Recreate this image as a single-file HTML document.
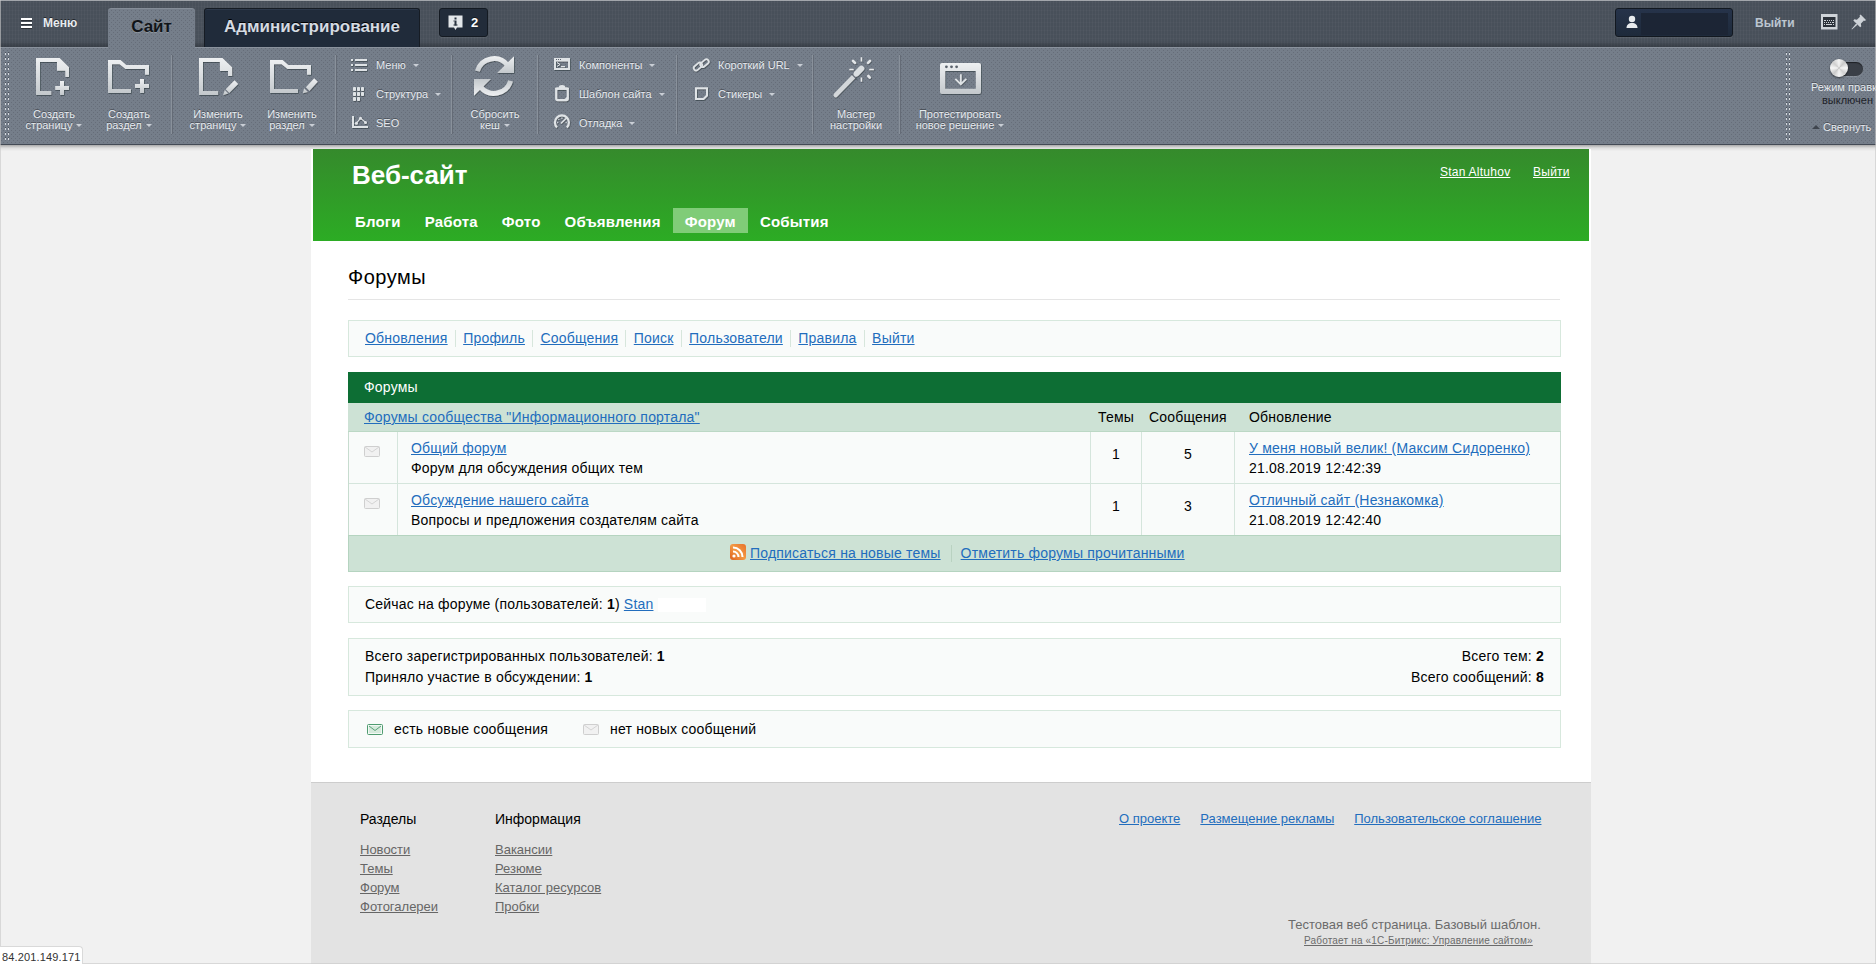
<!DOCTYPE html>
<html><head><meta charset="utf-8">
<style>
*{margin:0;padding:0;box-sizing:border-box}
html,body{width:1876px;height:964px;overflow:hidden}
body{background:#f1f1f1;font-family:"Liberation Sans",sans-serif;position:relative;color:#000}
.abs{position:absolute}
/* window borders */
#wb-top{left:0;top:0;width:1876px;height:1px;background:#a2a6ab;z-index:50}
#wb-left{left:0;top:0;width:1px;height:964px;background:rgba(200,200,200,.6);z-index:50}
#wb-right{left:1875px;top:0;width:1px;height:964px;background:rgba(200,200,200,.6);z-index:50}
/* top bar */
#topbar{left:0;top:1px;width:1876px;height:46px;background-color:#48505a;
 background-image:linear-gradient(transparent 40px,rgba(20,24,30,.35) 46px),repeating-linear-gradient(90deg,rgba(255,255,255,.03) 0 1px,transparent 1px 3px),repeating-linear-gradient(0deg,rgba(255,255,255,.02) 0 1px,transparent 1px 4px)}
#panel{left:0;top:47px;width:1876px;height:98px;background-color:#757e8a;
 background-image:conic-gradient(from 270deg at 1px 1px,#666d79 90deg,transparent 0),conic-gradient(from 270deg at 1px 1px,#666d79 90deg,transparent 0);
 background-size:4px 4px;background-position:1px 0,3px 2px;border-top:1px solid #8a929d;border-bottom:1px solid #434a55}
#shadow{left:0;top:145px;width:1876px;height:6px;background:linear-gradient(#a9a9a9,#dedede 50%,#f0f0f0)}
.tb-txt{color:#e8ecf0;font-weight:bold;text-shadow:0 -1px 0 rgba(0,0,0,.5)}
#menu-ic{left:21px;top:18px;width:11px;height:11px}
#menu-ic i{display:block;height:2px;background:#fff;margin-bottom:2px;box-shadow:0 1px 0 rgba(0,0,0,.4)}
#menu-t{left:43px;top:16px;font-size:12px}
#tab-site{left:108px;top:8px;width:87px;height:40px;background-color:#757e8a;border-radius:3px 3px 0 0;
 background-image:conic-gradient(from 270deg at 1px 1px,#666d79 90deg,transparent 0),conic-gradient(from 270deg at 1px 1px,#666d79 90deg,transparent 0);
 background-size:4px 4px;background-position:1px 0,3px 2px;box-shadow:inset 0 1px 0 #858d98;
 font-size:17px;font-weight:bold;color:#111418;text-align:center;line-height:38px;text-shadow:0 1px 0 rgba(255,255,255,.2);z-index:2}
#tab-adm{left:204px;top:8px;width:216px;height:39px;background:#202b3a;border:1px solid #161c24;border-bottom:none;border-radius:3px 3px 0 0;
 font-size:17px;font-weight:bold;color:#d5dbe2;text-align:center;line-height:36px;text-shadow:0 -1px 0 #000;box-shadow:inset 0 1px 0 #2c384a}
#notif{left:439px;top:8px;width:49px;height:29px;background:#222c3a;border:1px solid #141a22;border-radius:3px;box-shadow:0 1px 0 rgba(255,255,255,.08)}
#user{left:1615px;top:8px;width:118px;height:29px;background:linear-gradient(#26334a,#1e2a3b);border:1px solid #121820;border-radius:3px;box-shadow:0 1px 0 rgba(255,255,255,.08)}
#logout{left:1755px;top:16px;font-size:12px;color:#bcc6d1;font-weight:bold}
.lbl{font-size:11px;color:#e6eaef;text-align:center;line-height:11px;text-shadow:0 -1px 0 rgba(0,0,0,.35)}
.sm .arr{margin-left:7px}
.sm{font-size:11px;color:#e6eaef;text-shadow:0 -1px 0 rgba(0,0,0,.35)}
.arr{display:inline-block;width:0;height:0;border-left:3px solid transparent;border-right:3px solid transparent;border-top:3px solid #c9ced5;vertical-align:middle;margin-left:4px;position:relative;top:-1px}
.sep{width:1px;background:#89919b;box-shadow:1px 0 0 #646b76}
svg.ic{position:absolute;overflow:visible}
/* site */
#site{left:311px;top:149px;width:1280px;height:633px;background:#fff}
#green{left:313px;top:149px;width:1276px;height:92px;background:linear-gradient(#358a2c,#2cac24)}
#logo{left:352px;top:160px;font-size:26px;font-weight:bold;color:#fff}
#hlinks{top:165px;font-size:12px;color:#fff;text-decoration:underline}
#nav{left:343px;top:208px;height:25px;display:flex}
#nav a{display:block;padding:1px 12px 0;letter-spacing:.2px;font-size:15px;font-weight:bold;color:#fff;line-height:26px;height:25px;text-decoration:none}
#nav a.act{background:#80cc78}
#h1{left:348px;top:266px;font-size:20px;letter-spacing:.5px;color:#000}
#hr{left:348px;top:299px;width:1212px;height:1px;background:#e5e5e5}
.box{position:absolute;left:348px;width:1213px;background:#f9fbfa;border:1px solid #d7e8dd;font-size:14px;letter-spacing:.2px}
a.l{color:#226dbd;text-decoration:underline}
#fnav{top:320px;height:37px;padding:8px 0 0 16px;line-height:18px}
#fnav .s{display:inline-block;width:1px;height:17px;background:#d7e6dc;vertical-align:middle;margin:0 7.5px 0 7px;position:relative;top:-1px}
#tbl{left:348px;top:372px;width:1213px;font-size:14px}
#th{left:348px;top:372px;width:1213px;height:31px;background:#0d6e34;color:#fff;font-size:14px;letter-spacing:.2px;padding:7px 0 0 16px}
.cell{position:absolute}

.t14{font-size:14px;color:#000;letter-spacing:.2px}
.vs{display:inline-block;width:1px;height:17px;background:#b9d2c1;vertical-align:middle;margin:0 9px 0 10px;position:relative;top:-1px}
.flk{font-size:13px;line-height:19px;color:#666;text-decoration:underline}
</style></head><body>
<div id="wb-top" class="abs"></div><div id="wb-left" class="abs"></div><div id="wb-right" class="abs"></div><div class="abs" style="left:0;top:963px;width:1876px;height:1px;background:rgba(200,200,200,.6);z-index:50"></div>

<!-- TOP BAR -->
<div id="topbar" class="abs"></div>
<div id="menu-ic" class="abs"><i></i><i></i><i></i></div>
<div id="menu-t" class="abs tb-txt">Меню</div>
<div id="panel" class="abs"></div>
<div id="tab-site" class="abs">Сайт</div>
<div id="tab-adm" class="abs">Администрирование</div>
<div id="notif" class="abs">
 <svg class="ic" style="left:8px;top:6px" width="15" height="16" viewBox="0 0 15 16"><path d="M0.5 0.5h14v12H9L7.5 15 6 12.5H0.5z" fill="#e3e7ea"/><rect x="6.5" y="2.5" width="2" height="2" fill="#28323f"/><rect x="6.5" y="5.5" width="2" height="5" fill="#28323f"/><rect x="5.5" y="5.5" width="1" height="1" fill="#28323f"/><rect x="5.5" y="9.5" width="4" height="1" fill="#28323f"/></svg>
 <span class="abs tb-txt" style="left:31px;top:6px;font-size:13px;color:#fff">2</span>
</div>
<div id="user" class="abs"><div class="abs" style="left:25px;top:4px;width:87px;height:22px;background:#1c2535"></div>
 <svg class="ic" style="left:10px;top:6px" width="12" height="14" viewBox="0 0 12 14"><circle cx="6" cy="4" r="3.2" fill="#e8ebee"/><path d="M0.5 13c0-3 2-5 5.5-5s5.5 2 5.5 5z" fill="#e8ebee"/></svg>
</div>
<div id="logout" class="abs">Выйти</div>
<svg class="ic" style="left:1821px;top:14px" width="17" height="16" viewBox="0 0 17 16"><rect x="0" y="0" width="16.5" height="15.5" fill="#cfd4d9"/><rect x="2" y="3" width="12.5" height="10" fill="#2c323a"/><g fill="#cfd4d9"><rect x="3" y="6" width="2" height="1"/><rect x="6" y="6" width="1" height="1"/><rect x="8" y="6" width="1" height="1"/><rect x="10" y="6" width="1" height="1"/><rect x="12" y="6" width="1" height="1"/><rect x="3" y="8" width="1" height="1"/><rect x="5" y="8" width="1" height="1"/><rect x="7" y="8" width="1" height="1"/><rect x="9" y="8" width="1" height="1"/><rect x="11" y="8" width="2" height="1"/><rect x="3" y="10" width="1" height="1"/><rect x="5" y="10" width="6" height="1"/><rect x="12" y="10" width="1" height="1"/></g></svg>
<svg class="ic" style="left:1851px;top:14px" width="16" height="16" viewBox="0 0 16 16"><g fill="#cdd2d7"><path d="M9.6 0.6L15 6 13.9 7.1 12.9 6.6 9.8 9.7 10.3 12.2 9.2 13.3 2.3 6.4 3.4 5.3 5.9 5.8 9 2.7 8.5 1.7Z"/><path d="M5.2 9.6L6.4 10.8 1 15.5 0.6 15.1Z"/></g></svg>

<!-- panel grip -->
<svg class="abs" style="left:0;top:0;z-index:5" width="1876" height="150" viewBox="0 0 1876 150">
<defs>
 <linearGradient id="ig" x1="0" y1="0" x2="0" y2="1"><stop offset="0" stop-color="#eef0f2"/><stop offset="1" stop-color="#c3c8cc"/></linearGradient>
 <filter id="sh" x="-20%" y="-20%" width="140%" height="140%"><feDropShadow dx="0.6" dy="0.8" stdDeviation="0.5" flood-color="#2a3038" flood-opacity="0.7"/></filter>
</defs>
<g><rect x="5" y="52" width="1" height="1" fill="#4b525c"/><rect x="5" y="53" width="1" height="2" fill="#d5d9de"/><rect x="5" y="57" width="1" height="1" fill="#4b525c"/><rect x="5" y="58" width="1" height="2" fill="#d5d9de"/><rect x="5" y="62" width="1" height="1" fill="#4b525c"/><rect x="5" y="63" width="1" height="2" fill="#d5d9de"/><rect x="5" y="67" width="1" height="1" fill="#4b525c"/><rect x="5" y="68" width="1" height="2" fill="#d5d9de"/><rect x="5" y="72" width="1" height="1" fill="#4b525c"/><rect x="5" y="73" width="1" height="2" fill="#d5d9de"/><rect x="5" y="77" width="1" height="1" fill="#4b525c"/><rect x="5" y="78" width="1" height="2" fill="#d5d9de"/><rect x="5" y="82" width="1" height="1" fill="#4b525c"/><rect x="5" y="83" width="1" height="2" fill="#d5d9de"/><rect x="5" y="87" width="1" height="1" fill="#4b525c"/><rect x="5" y="88" width="1" height="2" fill="#d5d9de"/><rect x="5" y="92" width="1" height="1" fill="#4b525c"/><rect x="5" y="93" width="1" height="2" fill="#d5d9de"/><rect x="5" y="97" width="1" height="1" fill="#4b525c"/><rect x="5" y="98" width="1" height="2" fill="#d5d9de"/><rect x="5" y="102" width="1" height="1" fill="#4b525c"/><rect x="5" y="103" width="1" height="2" fill="#d5d9de"/><rect x="5" y="107" width="1" height="1" fill="#4b525c"/><rect x="5" y="108" width="1" height="2" fill="#d5d9de"/><rect x="5" y="112" width="1" height="1" fill="#4b525c"/><rect x="5" y="113" width="1" height="2" fill="#d5d9de"/><rect x="5" y="117" width="1" height="1" fill="#4b525c"/><rect x="5" y="118" width="1" height="2" fill="#d5d9de"/><rect x="5" y="122" width="1" height="1" fill="#4b525c"/><rect x="5" y="123" width="1" height="2" fill="#d5d9de"/><rect x="5" y="127" width="1" height="1" fill="#4b525c"/><rect x="5" y="128" width="1" height="2" fill="#d5d9de"/><rect x="5" y="132" width="1" height="1" fill="#4b525c"/><rect x="5" y="133" width="1" height="2" fill="#d5d9de"/><rect x="5" y="137" width="1" height="1" fill="#4b525c"/><rect x="5" y="138" width="1" height="2" fill="#d5d9de"/><rect x="8" y="52" width="1" height="1" fill="#4b525c"/><rect x="8" y="53" width="1" height="2" fill="#d5d9de"/><rect x="8" y="57" width="1" height="1" fill="#4b525c"/><rect x="8" y="58" width="1" height="2" fill="#d5d9de"/><rect x="8" y="62" width="1" height="1" fill="#4b525c"/><rect x="8" y="63" width="1" height="2" fill="#d5d9de"/><rect x="8" y="67" width="1" height="1" fill="#4b525c"/><rect x="8" y="68" width="1" height="2" fill="#d5d9de"/><rect x="8" y="72" width="1" height="1" fill="#4b525c"/><rect x="8" y="73" width="1" height="2" fill="#d5d9de"/><rect x="8" y="77" width="1" height="1" fill="#4b525c"/><rect x="8" y="78" width="1" height="2" fill="#d5d9de"/><rect x="8" y="82" width="1" height="1" fill="#4b525c"/><rect x="8" y="83" width="1" height="2" fill="#d5d9de"/><rect x="8" y="87" width="1" height="1" fill="#4b525c"/><rect x="8" y="88" width="1" height="2" fill="#d5d9de"/><rect x="8" y="92" width="1" height="1" fill="#4b525c"/><rect x="8" y="93" width="1" height="2" fill="#d5d9de"/><rect x="8" y="97" width="1" height="1" fill="#4b525c"/><rect x="8" y="98" width="1" height="2" fill="#d5d9de"/><rect x="8" y="102" width="1" height="1" fill="#4b525c"/><rect x="8" y="103" width="1" height="2" fill="#d5d9de"/><rect x="8" y="107" width="1" height="1" fill="#4b525c"/><rect x="8" y="108" width="1" height="2" fill="#d5d9de"/><rect x="8" y="112" width="1" height="1" fill="#4b525c"/><rect x="8" y="113" width="1" height="2" fill="#d5d9de"/><rect x="8" y="117" width="1" height="1" fill="#4b525c"/><rect x="8" y="118" width="1" height="2" fill="#d5d9de"/><rect x="8" y="122" width="1" height="1" fill="#4b525c"/><rect x="8" y="123" width="1" height="2" fill="#d5d9de"/><rect x="8" y="127" width="1" height="1" fill="#4b525c"/><rect x="8" y="128" width="1" height="2" fill="#d5d9de"/><rect x="8" y="132" width="1" height="1" fill="#4b525c"/><rect x="8" y="133" width="1" height="2" fill="#d5d9de"/><rect x="8" y="137" width="1" height="1" fill="#4b525c"/><rect x="8" y="138" width="1" height="2" fill="#d5d9de"/><rect x="1786" y="52" width="1" height="1" fill="#4b525c"/><rect x="1786" y="53" width="1" height="2" fill="#d5d9de"/><rect x="1786" y="57" width="1" height="1" fill="#4b525c"/><rect x="1786" y="58" width="1" height="2" fill="#d5d9de"/><rect x="1786" y="62" width="1" height="1" fill="#4b525c"/><rect x="1786" y="63" width="1" height="2" fill="#d5d9de"/><rect x="1786" y="67" width="1" height="1" fill="#4b525c"/><rect x="1786" y="68" width="1" height="2" fill="#d5d9de"/><rect x="1786" y="72" width="1" height="1" fill="#4b525c"/><rect x="1786" y="73" width="1" height="2" fill="#d5d9de"/><rect x="1786" y="77" width="1" height="1" fill="#4b525c"/><rect x="1786" y="78" width="1" height="2" fill="#d5d9de"/><rect x="1786" y="82" width="1" height="1" fill="#4b525c"/><rect x="1786" y="83" width="1" height="2" fill="#d5d9de"/><rect x="1786" y="87" width="1" height="1" fill="#4b525c"/><rect x="1786" y="88" width="1" height="2" fill="#d5d9de"/><rect x="1786" y="92" width="1" height="1" fill="#4b525c"/><rect x="1786" y="93" width="1" height="2" fill="#d5d9de"/><rect x="1786" y="97" width="1" height="1" fill="#4b525c"/><rect x="1786" y="98" width="1" height="2" fill="#d5d9de"/><rect x="1786" y="102" width="1" height="1" fill="#4b525c"/><rect x="1786" y="103" width="1" height="2" fill="#d5d9de"/><rect x="1786" y="107" width="1" height="1" fill="#4b525c"/><rect x="1786" y="108" width="1" height="2" fill="#d5d9de"/><rect x="1786" y="112" width="1" height="1" fill="#4b525c"/><rect x="1786" y="113" width="1" height="2" fill="#d5d9de"/><rect x="1786" y="117" width="1" height="1" fill="#4b525c"/><rect x="1786" y="118" width="1" height="2" fill="#d5d9de"/><rect x="1786" y="122" width="1" height="1" fill="#4b525c"/><rect x="1786" y="123" width="1" height="2" fill="#d5d9de"/><rect x="1786" y="127" width="1" height="1" fill="#4b525c"/><rect x="1786" y="128" width="1" height="2" fill="#d5d9de"/><rect x="1786" y="132" width="1" height="1" fill="#4b525c"/><rect x="1786" y="133" width="1" height="2" fill="#d5d9de"/><rect x="1786" y="137" width="1" height="1" fill="#4b525c"/><rect x="1786" y="138" width="1" height="2" fill="#d5d9de"/><rect x="1789" y="52" width="1" height="1" fill="#4b525c"/><rect x="1789" y="53" width="1" height="2" fill="#d5d9de"/><rect x="1789" y="57" width="1" height="1" fill="#4b525c"/><rect x="1789" y="58" width="1" height="2" fill="#d5d9de"/><rect x="1789" y="62" width="1" height="1" fill="#4b525c"/><rect x="1789" y="63" width="1" height="2" fill="#d5d9de"/><rect x="1789" y="67" width="1" height="1" fill="#4b525c"/><rect x="1789" y="68" width="1" height="2" fill="#d5d9de"/><rect x="1789" y="72" width="1" height="1" fill="#4b525c"/><rect x="1789" y="73" width="1" height="2" fill="#d5d9de"/><rect x="1789" y="77" width="1" height="1" fill="#4b525c"/><rect x="1789" y="78" width="1" height="2" fill="#d5d9de"/><rect x="1789" y="82" width="1" height="1" fill="#4b525c"/><rect x="1789" y="83" width="1" height="2" fill="#d5d9de"/><rect x="1789" y="87" width="1" height="1" fill="#4b525c"/><rect x="1789" y="88" width="1" height="2" fill="#d5d9de"/><rect x="1789" y="92" width="1" height="1" fill="#4b525c"/><rect x="1789" y="93" width="1" height="2" fill="#d5d9de"/><rect x="1789" y="97" width="1" height="1" fill="#4b525c"/><rect x="1789" y="98" width="1" height="2" fill="#d5d9de"/><rect x="1789" y="102" width="1" height="1" fill="#4b525c"/><rect x="1789" y="103" width="1" height="2" fill="#d5d9de"/><rect x="1789" y="107" width="1" height="1" fill="#4b525c"/><rect x="1789" y="108" width="1" height="2" fill="#d5d9de"/><rect x="1789" y="112" width="1" height="1" fill="#4b525c"/><rect x="1789" y="113" width="1" height="2" fill="#d5d9de"/><rect x="1789" y="117" width="1" height="1" fill="#4b525c"/><rect x="1789" y="118" width="1" height="2" fill="#d5d9de"/><rect x="1789" y="122" width="1" height="1" fill="#4b525c"/><rect x="1789" y="123" width="1" height="2" fill="#d5d9de"/><rect x="1789" y="127" width="1" height="1" fill="#4b525c"/><rect x="1789" y="128" width="1" height="2" fill="#d5d9de"/><rect x="1789" y="132" width="1" height="1" fill="#4b525c"/><rect x="1789" y="133" width="1" height="2" fill="#d5d9de"/><rect x="1789" y="137" width="1" height="1" fill="#4b525c"/><rect x="1789" y="138" width="1" height="2" fill="#d5d9de"/></g>
<g filter="url(#sh)">
 <g fill="url(#ig)">
  <path d="M36 58H59.6L69 67.3V77H65.3V70.7H57V62H40V91H51.3V95H36Z"/>
  <path d="M55.2 86H69V90H55.2Z M60 81H64V95H60Z"/>
 </g>
 <g fill="url(#ig)">
  <path d="M108 60H120.6L126.3 65H149V74.8H145V68.9H125.5L119.6 64.2H112V89H131V93H108Z"/>
  <path d="M135 84H149V88H135Z M140 79H144V93H140Z"/>
 </g>
 <g fill="url(#ig)">
  <path d="M199 58H222.5L232.1 67.3V76H228V70.9H219.9V62H203V91H218.1V95H199Z"/>
  <path d="M225.7 89.3L234.5 80.3L238.2 84L229.3 93Z M223 95.2L224.8 90L228.3 93.5Z"/>
 </g>
 <g fill="url(#ig)">
  <path d="M270 60H282.6L288.3 65H311V74.8H307V68.9H287.5L281.6 64.2H274V89H298V93H270Z"/>
  <path d="M305.9 87.3L314.2 78.2L317.8 81.8L309.5 90.9Z M302.8 93.2L304.1 88.3L308 91.9Z"/>
 </g>
 <g fill="url(#ig)"><path d="M475.0 70.4A19.8 19.8 0 0 1 509.6 63.8L505.7 66.9A14.8 14.8 0 0 0 479.8 71.8Z M514 56.2V73H497Z"/><path d="M475.0 70.4A19.8 19.8 0 0 1 509.6 63.8L505.7 66.9A14.8 14.8 0 0 0 479.8 71.8Z M514 56.2V73H497Z" transform="rotate(180 494 76)"/></g>
 <g fill="url(#ig)" stroke="none">
  <path d="M835.8 95L853.4 76.9" stroke="#d3d7da" stroke-width="4.6" stroke-linecap="round"/>
  <path d="M856.6 73.6L861.4 68.6" stroke="#dadee1" stroke-width="5.8" stroke-linecap="round"/><path d="M851.8 74.2L856.4 78.8" stroke="#5d6470" stroke-width="1.1"/>
  <g stroke="#e6e9eb" stroke-width="1.5"><path d="M861.4 57.2V61.6M861.4 77.4V81.8M849.3 69.5H853.7M869.2 69.5H873.9"/></g>
  <g stroke="#e3e6e9" stroke-width="2.6" stroke-linecap="round"><path d="M853 60.8L855 62.8M870 60.8L868 62.8M868.3 76L869.8 77.6"/></g>
 </g>
 <g>
  <path fill="url(#ig)" fill-rule="evenodd" d="M942 63H979Q981 63 981 65V92Q981 94 979 94H942Q940 94 940 92V65Q940 63 942 63Z M945.2 71.1V88.8H975.8V71.1Z"/>
  <g fill="#5a626d"><circle cx="946.4" cy="66.8" r="1.4"/><circle cx="951.5" cy="66.8" r="1.4"/><circle cx="956.6" cy="66.8" r="1.4"/></g>
  <path d="M960.8 74.3V84.5M955.3 78.8L960.8 84.3L966.3 78.8" fill="none" stroke="#dfe3e6" stroke-width="1.8"/>
 </g>
 <!-- small icons -->
 <g fill="#dfe3e6">
  <rect x="351" y="59" width="2" height="2"/><rect x="355" y="59" width="12" height="2"/>
  <rect x="351" y="64" width="2" height="2"/><rect x="355" y="64" width="12" height="2"/>
  <rect x="351" y="69" width="2" height="2"/><rect x="355" y="69" width="12" height="2"/>
  <rect x="353" y="87" width="3" height="4" rx=".7"/><rect x="357" y="87" width="3" height="4" rx=".7"/><rect x="361" y="87" width="3" height="4" rx=".7"/>
  <rect x="353" y="92" width="3" height="4" rx=".7"/><rect x="357" y="92" width="3" height="4" rx=".7"/><rect x="361" y="92" width="3" height="4" rx=".7"/>
  <rect x="353" y="97" width="3" height="4" rx=".7"/><rect x="357" y="97" width="3" height="4" rx=".7"/>
  <path d="M352 116H354V126H368V128H352Z"/>
  <path d="M356.4 123.2L360.5 118.2L365.5 122.4" fill="none" stroke="#dfe3e6" stroke-width="1.1"/>
  <circle cx="356.4" cy="123.2" r="1.5"/><circle cx="360.5" cy="118.2" r="1.5"/><circle cx="365.5" cy="122.4" r="1.5"/>
 </g>
 <g fill="#dfe3e6">
  <path fill-rule="evenodd" d="M554 58H570V70H554Z M556 61.5V68H568V61.5Z"/>
  <g fill="#5d6570"><rect x="556" y="59" width="1" height="1"/><rect x="558" y="59" width="1" height="1"/><rect x="560" y="59" width="1" height="1"/></g><path d="M557 62.5L560 64.5L557 66.5" fill="none" stroke="#dfe3e6" stroke-width="1"/><rect x="561" y="66" width="4" height="1.2"/>
  <rect x="556.2" y="88.6" width="11.6" height="11.6" rx="1.6" fill="none" stroke="#dfe3e6" stroke-width="2.2"/>
  <rect x="555" y="87.5" width="14" height="2.2" rx="1"/>
  <ellipse cx="562" cy="87" rx="3.2" ry="2"/>
  <path d="M564.5 99.2L567 96.7V99.2Z"/>
  <path d="M557 127.4A7 7 0 1 1 566.8 127.4" fill="none" stroke="#dfe3e6" stroke-width="2.2"/>
  <g fill="#c9ced3"><circle cx="557.6" cy="122.5" r=".7"/><circle cx="558.8" cy="119.4" r=".7"/><circle cx="561.9" cy="118.2" r=".7"/><circle cx="566.2" cy="122.5" r=".7"/></g>
  <path d="M561.4 123L566.3 118.3" stroke="#dfe3e6" stroke-width="1.5" stroke-linecap="round"/>
 </g>
 <g fill="none" stroke="#dfe3e6" stroke-width="1.7">
  <rect x="693.2" y="64.2" width="9.5" height="4.8" rx="2.4" transform="rotate(-40 697.9 66.6)"/>
  <rect x="699.8" y="60.8" width="9.5" height="4.8" rx="2.4" transform="rotate(-40 704.5 63.2)"/>
  <path d="M696 88.2H707V95.5L703.5 99H696Z" stroke-width="2"/>
 </g>
</g>
</svg>
<div class="abs sep" style="left:171px;top:55px;height:79px"></div>
<div class="abs sep" style="left:335px;top:55px;height:79px"></div>
<div class="abs sep" style="left:451px;top:55px;height:79px"></div>
<div class="abs sep" style="left:537px;top:55px;height:79px"></div>
<div class="abs sep" style="left:676px;top:55px;height:79px"></div>
<div class="abs sep" style="left:812px;top:55px;height:79px"></div>
<div class="abs sep" style="left:899px;top:55px;height:79px"></div>
<div class="abs lbl" style="left:20px;top:109px;width:68px">Создать<br>страницу<span class="arr"></span></div>
<div class="abs lbl" style="left:94px;top:109px;width:70px">Создать<br>раздел<span class="arr"></span></div>
<div class="abs lbl" style="left:182px;top:109px;width:72px">Изменить<br>страницу<span class="arr"></span></div>
<div class="abs lbl" style="left:256px;top:109px;width:72px">Изменить<br>раздел<span class="arr"></span></div>
<div class="abs sm" style="left:376px;top:59px">Меню<span class="arr"></span></div>
<div class="abs sm" style="left:376px;top:88px">Структура<span class="arr"></span></div>
<div class="abs sm" style="left:376px;top:117px">SEO</div>
<div class="abs lbl" style="left:460px;top:109px;width:70px">Сбросить<br>кеш<span class="arr"></span></div>
<div class="abs sm" style="left:579px;top:59px">Компоненты<span class="arr"></span></div>
<div class="abs sm" style="left:579px;top:88px">Шаблон сайта<span class="arr"></span></div>
<div class="abs sm" style="left:579px;top:117px">Отладка<span class="arr"></span></div>
<div class="abs sm" style="left:718px;top:59px">Короткий URL<span class="arr"></span></div>
<div class="abs sm" style="left:718px;top:88px">Стикеры<span class="arr"></span></div>
<div class="abs lbl" style="left:822px;top:109px;width:68px">Мастер<br>настройки</div>
<div class="abs lbl" style="left:905px;top:109px;width:110px">Протестировать<br>новое решение<span class="arr"></span></div>

<!-- edit mode toggle -->
<div class="abs" style="left:1836px;top:62px;width:27px;height:14px;border-radius:7px;background:#3a3f47;box-shadow:inset 0 1px 1px rgba(0,0,0,.5),0 1px 0 rgba(255,255,255,.15)"></div>
<div class="abs" style="left:1830px;top:59px;width:18px;height:18px;border-radius:50%;background:conic-gradient(#f4f4f4,#c9c9c9 12%,#f7f7f7 25%,#cfcfcf 37%,#f4f4f4 50%,#c9c9c9 62%,#f7f7f7 75%,#cfcfcf 87%,#f4f4f4);box-shadow:0 1px 2px rgba(0,0,0,.55)"></div>
<div class="abs sm" style="left:1811px;top:81px;white-space:nowrap">Режим правки</div>
<div class="abs" style="left:1822px;top:94px;font-size:11px;color:#1e2228">выключен</div>
<div class="abs sm" style="left:1812px;top:121px"><span style="display:inline-block;width:0;height:0;border-left:4px solid transparent;border-right:4px solid transparent;border-bottom:4px solid #3f454e;margin-right:3px;vertical-align:middle;position:relative;top:-1px"></span>Свернуть</div>
<div id="shadow" class="abs"></div>

<!-- SITE -->
<div id="site" class="abs"></div>
<div id="green" class="abs"></div>
<div id="logo" class="abs">Веб-сайт</div>
<a id="hl1" class="abs" style="left:1440px;top:165px;font-size:12px;letter-spacing:.25px;color:#fff;text-decoration:underline">Stan Altuhov</a>
<a id="hl2" class="abs" style="left:1533px;top:165px;font-size:12px;letter-spacing:.25px;color:#fff;text-decoration:underline">Выйти</a>
<div id="nav" class="abs"><a>Блоги</a><a>Работа</a><a>Фото</a><a>Объявления</a><a class="act">Форум</a><a>События</a></div>

<div id="h1" class="abs">Форумы</div>
<div id="hr" class="abs"></div>

<div id="fnav" class="box"><a class="l">Обновления</a><span class="s"></span><a class="l">Профиль</a><span class="s"></span><a class="l">Сообщения</a><span class="s"></span><a class="l">Поиск</a><span class="s"></span><a class="l">Пользователи</a><span class="s"></span><a class="l">Правила</a><span class="s"></span><a class="l">Выйти</a></div>


<!-- FORUM TABLE -->
<div id="th" class="abs">Форумы</div>
<div class="abs" style="left:348px;top:403px;width:1213px;height:169px;border:1px solid #c7dccf;border-top:none;background:#f9fbfa"></div>
<div class="abs" style="left:348px;top:403px;width:1213px;height:29px;background:#cde2d5"></div>
<div class="abs" style="left:348px;top:535px;width:1213px;height:37px;background:#cde2d5;border:1px solid #b5d4c0;"></div>
<!-- row separators -->
<div class="abs" style="left:348px;top:431px;width:1213px;height:1px;background:#bcd8c5"></div>
<div class="abs" style="left:349px;top:483px;width:1211px;height:1px;background:#d5e5dc"></div>
<div class="abs" style="left:397px;top:432px;width:1px;height:103px;background:#d5e5dc"></div>
<div class="abs" style="left:1090px;top:432px;width:1px;height:103px;background:#d5e5dc"></div>
<div class="abs" style="left:1141px;top:432px;width:1px;height:103px;background:#d5e5dc"></div>
<div class="abs" style="left:1234px;top:432px;width:1px;height:103px;background:#d5e5dc"></div>

<div class="abs t14" style="left:364px;top:409px"><a class="l">Форумы сообщества "Информационного портала"</a></div>
<div class="abs t14" style="left:1098px;top:409px">Темы</div>
<div class="abs t14" style="left:1149px;top:409px">Сообщения</div>
<div class="abs t14" style="left:1249px;top:409px">Обновление</div>

<svg class="ic" style="left:364px;top:446px" width="16" height="11" viewBox="0 0 16 11"><rect x=".5" y=".5" width="15" height="10" rx="1" fill="#f1f1f1" stroke="#cfcfcf"/><path d="M1 1l7 5 7-5" fill="none" stroke="#d4d4d4"/></svg>
<div class="abs t14" style="left:411px;top:438px;line-height:20px"><a class="l">Общий форум</a><br>Форум для обсуждения общих тем</div>
<div class="abs t14" style="left:1091px;top:446px;width:50px;text-align:center">1</div>
<div class="abs t14" style="left:1142px;top:446px;width:92px;text-align:center">5</div>
<div class="abs t14" style="left:1249px;top:438px;line-height:20px"><a class="l">У меня новый велик! (Максим Сидоренко)</a><br>21.08.2019 12:42:39</div>

<svg class="ic" style="left:364px;top:498px" width="16" height="11" viewBox="0 0 16 11"><rect x=".5" y=".5" width="15" height="10" rx="1" fill="#f1f1f1" stroke="#cfcfcf"/><path d="M1 1l7 5 7-5" fill="none" stroke="#d4d4d4"/></svg>
<div class="abs t14" style="left:411px;top:490px;line-height:20px"><a class="l">Обсуждение нашего сайта</a><br>Вопросы и предложения создателям сайта</div>
<div class="abs t14" style="left:1091px;top:498px;width:50px;text-align:center">1</div>
<div class="abs t14" style="left:1142px;top:498px;width:92px;text-align:center">3</div>
<div class="abs t14" style="left:1249px;top:490px;line-height:20px"><a class="l">Отличный сайт (Незнакомка)</a><br>21.08.2019 12:42:40</div>

<svg class="ic" style="left:730px;top:544px" width="16" height="16" viewBox="0 0 16 16"><defs><linearGradient id="rg" x1="1" y1="0" x2="0" y2="1"><stop offset="0" stop-color="#e7702a"/><stop offset=".5" stop-color="#f39a45"/><stop offset="1" stop-color="#dd5f1c"/></linearGradient></defs><rect x="0" y="0" width="16" height="16" rx="3" fill="url(#rg)"/><circle cx="4" cy="12" r="1.6" fill="#fff"/><path d="M3 7.5a5.5 5.5 0 0 1 5.5 5.5M3 3.5a9.5 9.5 0 0 1 9.5 9.5" fill="none" stroke="#fff" stroke-width="2"/></svg>
<div class="abs t14" style="left:750px;top:545px"><a class="l">Подписаться на новые темы</a><span class="vs"></span><a class="l">Отметить форумы прочитанными</a></div>

<!-- online -->
<div class="box" style="top:586px;height:37px;padding:9px 0 0 16px">Сейчас на форуме (пользователей: <b>1</b>) <a class="l">Stan</a><span style="display:inline-block;width:48px;height:14px;background:#fff;vertical-align:middle;margin-left:5px"></span></div>
<div class="box" style="top:638px;height:58px;padding:7px 16px 0 16px;line-height:21px">
 <div>Всего зарегистрированных пользователей: <b>1</b></div>
 <div>Приняло участие в обсуждении: <b>1</b></div>
 <div style="position:absolute;right:16px;top:7px;text-align:right">Всего тем: <b>2</b><br>Всего сообщений: <b>8</b></div>
</div>
<div class="box" style="top:710px;height:38px;padding:10px 0 0 45px">
 <svg class="ic" style="left:18px;top:13px" width="16" height="11" viewBox="0 0 16 11"><rect x=".5" y=".5" width="15" height="10" rx="1" fill="#d6eadc" stroke="#4f9c70"/><rect x="1.5" y="1.5" width="13" height="8" fill="none" stroke="#fff" stroke-opacity=".7"/><path d="M2 2l6 4.5 6-4.5" fill="none" stroke="#5aa27a"/></svg>
 есть новые сообщения
 <svg class="ic" style="left:234px;top:13px" width="16" height="11" viewBox="0 0 16 11"><rect x=".5" y=".5" width="15" height="10" rx="1" fill="#f1f1f1" stroke="#cfcfcf"/><path d="M1 1l7 5 7-5" fill="none" stroke="#d4d4d4"/></svg>
 <span style="position:absolute;left:261px;top:10px">нет новых сообщений</span>
</div>

<!-- FOOTER -->
<div class="abs" style="left:311px;top:782px;width:1280px;height:182px;background:#e3e3e3;border-top:1px solid #cdcdcd"></div>
<div class="abs" style="left:360px;top:811px;font-size:14px;color:#000">Разделы</div>
<div class="abs" style="left:495px;top:811px;font-size:14px;color:#000">Информация</div>
<div class="abs flk" style="left:360px;top:840px">Новости<br>Темы<br>Форум<br>Фотогалереи</div>
<div class="abs flk" style="left:495px;top:840px">Вакансии<br>Резюме<br>Каталог ресурсов<br>Пробки</div>
<div class="abs" style="left:1119px;top:811px;font-size:13px"><a class="l">О проекте</a><a class="l" style="margin-left:20px">Размещение рекламы</a><a class="l" style="margin-left:20px">Пользовательское соглашение</a></div>
<div class="abs" style="left:1288px;top:917px;font-size:13px;color:#6b6b6b">Тестовая веб страница. Базовый шаблон.</div>
<div class="abs" style="left:1304px;top:935px;font-size:10px;letter-spacing:.18px;color:#6b6b6b;text-decoration:underline">Работает на «1С-Битрикс: Управление сайтом»</div>

<div class="abs" style="left:0;top:946px;width:83px;height:19px;background:#fff;border:1px solid #d9d9d9;border-left:none;border-bottom:none;border-radius:0 4px 0 0;font-size:11px;letter-spacing:.15px;color:#333;padding:4px 0 0 2px;z-index:60">84.201.149.171</div>
</body></html>
